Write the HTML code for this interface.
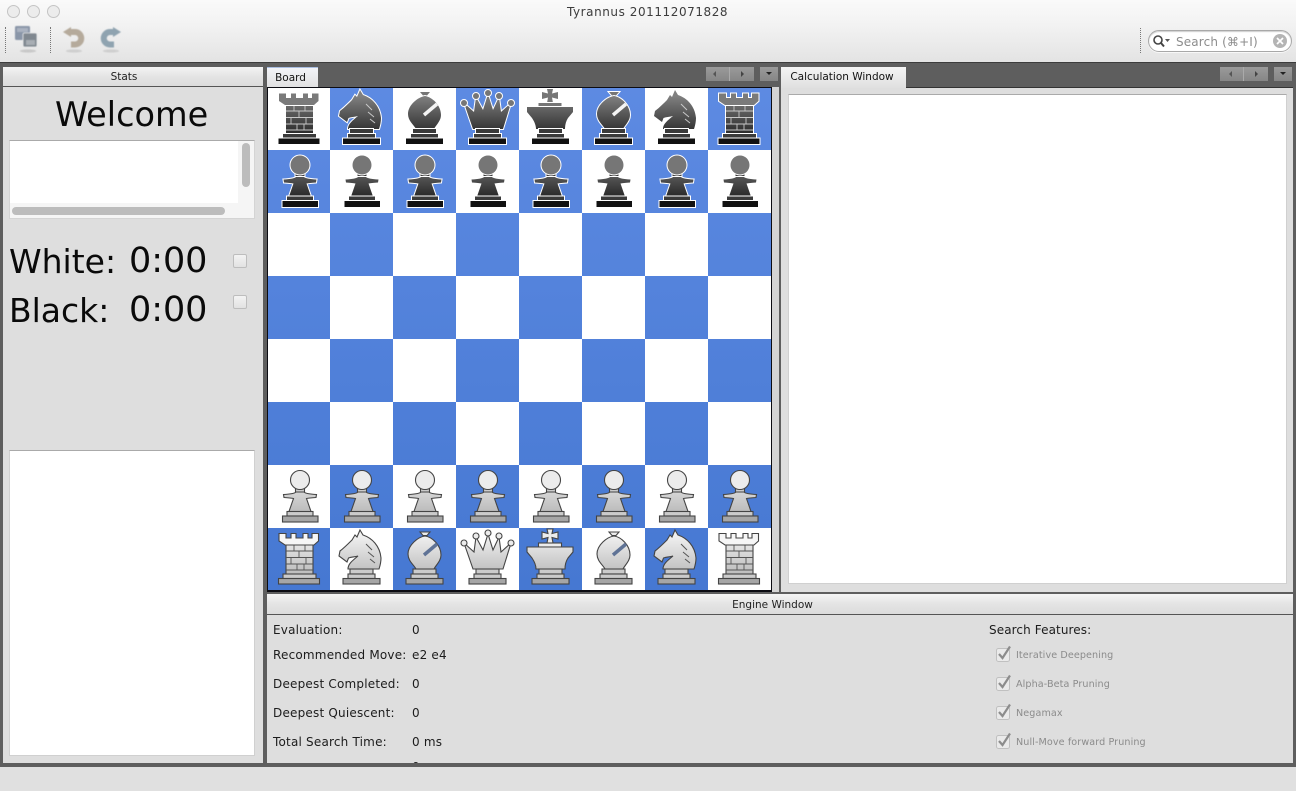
<!DOCTYPE html>
<html><head><meta charset="utf-8"><title>Tyrannus</title>
<style>
html,body{margin:0;padding:0;width:1296px;height:791px;overflow:hidden;background:#e0e0e0}
body{position:relative;font-family:"DejaVu Sans","Liberation Sans",sans-serif;color:#111}
div,span,svg{position:absolute;box-sizing:border-box}
.t{white-space:nowrap;line-height:1}
.hdr{background:linear-gradient(#f4f4f4,#e4e4e4 50%,#dcdcdc);text-align:center;font-size:10.5px;color:#222}
.lab{font-size:12px;color:#1c1c1c;letter-spacing:.2px}
.dis{font-size:9.6px;color:#8b8b8b;letter-spacing:.1px}
.btn{background:linear-gradient(#9a9a9a,#868686);height:14px;top:67px}
.tri{width:0;height:0;border:3px solid transparent}
.dots{width:1px;border-left:1px dotted #777}
.b{fill:url(#bg);stroke:#fff;stroke-width:2;paint-order:stroke;--h:#767676;--c:#3a3a3a;--e:#111;--r:#7a7a7a;--l:#c8c8c8;--s:#f4f4f4}
.w{fill:url(#wg);stroke:#444;stroke-width:1.1;--h:#ececec;--c:#cbcbcb;--e:#a6a6a6;--r:#f6f6f6;--l:#555;--s:#5f7396}
</style></head><body>

<!-- toolbar -->
<div style="left:0;top:0;width:1296px;height:63px;background:linear-gradient(#fafafa,#f2f2f2 40%,#e3e3e3)"></div>
<div style="left:7px;top:5px;width:13px;height:13px;border-radius:50%;border:1.5px solid #c4c4c4;background:#ececec"></div>
<div style="left:27px;top:5px;width:13px;height:13px;border-radius:50%;border:1.5px solid #c4c4c4;background:#ececec"></div>
<div style="left:47px;top:5px;width:13px;height:13px;border-radius:50%;border:1.5px solid #c4c4c4;background:#ececec"></div>
<div class="t" style="left:567px;top:6px;font-size:12px;letter-spacing:.56px;color:#3c3c3c">Tyrannus 201112071828</div>
<div class="dots" style="left:5px;top:27px;height:26px"></div>
<div class="dots" style="left:50px;top:27px;height:26px"></div>
<div class="dots" style="left:1140px;top:28px;height:25px"></div>

<svg style="left:0;top:0;filter:blur(.4px)" width="140" height="62" viewBox="0 0 140 62">
 <ellipse cx="28" cy="51" rx="8" ry="1.6" fill="#c8c8c8"/><ellipse cx="74" cy="51" rx="8" ry="1.6" fill="#cfcfcf"/><ellipse cx="111" cy="51" rx="8" ry="1.6" fill="#cfcfcf"/>
 <rect x="15" y="26" width="15" height="14" rx="1.5" fill="#8a96a8"/>
 <rect x="17" y="28" width="11" height="4" fill="#aab2c0"/>
 <rect x="23" y="33" width="14" height="14" rx="1.5" fill="#808890" stroke="#eee" stroke-width=".8"/>
 <rect x="26" y="40" width="9" height="5" fill="#a8aeb4"/>
 <path d="M68 32H75A6.2 6.2 0 0 1 75 44.5H71" fill="none" stroke="#b5aa9b" stroke-width="6"/>
 <path d="M63 32L71 27V37Z" fill="#b5aa9b"/>
 <path d="M116 32H110A6.2 6.2 0 0 0 110 44.5H114" fill="none" stroke="#8fa3b0" stroke-width="6"/>
 <path d="M121 32L113 27V37Z" fill="#8fa3b0"/>
</svg>

<!-- search -->
<div style="left:1148px;top:30px;width:144px;height:22px;border-radius:11px;background:#fff;border:1px solid #a8a8a8;box-shadow:inset 0 1px 1px #ccc,0 1px 0 #f8f8f8"></div>
<svg style="left:1152px;top:33px" width="20" height="16" viewBox="0 0 20 16"><circle cx="6" cy="7" r="4" fill="none" stroke="#444" stroke-width="1.6"/><path d="M9 10L12 13.5" stroke="#444" stroke-width="2"/><path d="M13 6H18L15.5 9Z" fill="#555"/></svg>
<div class="t" style="left:1176px;top:36px;font-size:12px;color:#8c8c8c;letter-spacing:.15px">Search (⌘+I)</div>
<svg style="left:1272px;top:33px" width="16" height="16" viewBox="0 0 16 16"><circle cx="8" cy="8" r="7" fill="#b4b4b4"/><path d="M5 5L11 11M11 5L5 11" stroke="#fff" stroke-width="1.7"/></svg>

<!-- main dark backdrop -->
<div style="left:0;top:62px;width:1296px;height:705px;background:#5e5e5e"></div>
<div style="left:0;top:62px;width:1296px;height:1px;background:#3c3c3c"></div>

<!-- Stats panel -->
<div style="left:3px;top:67px;width:260px;height:696px;background:#dedede"></div>
<div class="hdr" style="left:3px;top:67px;width:260px;height:20px;border-bottom:1px solid #555;padding-top:3.5px;padding-right:18px">Stats</div>
<div class="t" style="left:55px;top:98px;font-size:33.5px;color:#0a0a0a">Welcome</div>
<div style="left:9px;top:140px;width:246px;height:79px;background:#f5f5f5;border:1px solid #d4d4d4;border-top-color:#aaa"></div>
<div style="left:10px;top:141px;width:228px;height:62px;background:#fff"></div>
<div style="left:242px;top:143px;width:8px;height:44px;border-radius:4px;background:#bcbcbc"></div>
<div style="left:12px;top:207px;width:213px;height:8px;border-radius:4px;background:#bcbcbc"></div>

<div class="t" style="left:9px;top:245px;font-size:33px;color:#0a0a0a">White:</div>
<div class="t" style="left:129px;top:244px;font-size:35px;color:#0a0a0a;letter-spacing:-.05px">0:00</div>
<div style="left:233px;top:254px;width:14px;height:14px;border:1px solid #bdbdbd;border-radius:2px;background:linear-gradient(#f3f3f3,#e2e2e2)"></div>
<div class="t" style="left:9px;top:294px;font-size:33px;color:#0a0a0a">Black:</div>
<div class="t" style="left:129px;top:293px;font-size:35px;color:#0a0a0a;letter-spacing:-.05px">0:00</div>
<div style="left:233px;top:295px;width:14px;height:14px;border:1px solid #bdbdbd;border-radius:2px;background:linear-gradient(#f3f3f3,#e2e2e2)"></div>
<div style="left:9px;top:450px;width:246px;height:306px;background:#fff;border:1px solid #d0d0d0;border-top-color:#aaa"></div>

<!-- Board tab and controls -->
<div class="hdr" style="left:267px;top:67px;width:51px;height:21px;padding-top:3.5px;padding-right:4px;color:#111;border-top:1px solid #a9bde0;background:linear-gradient(#f2f4f8,#e0e0e0)">Board</div>
<div class="btn" style="left:706px;width:24px;border-right:1px solid #aaa"></div>
<div class="btn" style="left:730px;width:24px"></div>
<div class="btn" style="left:760px;width:18px"></div>
<div class="tri" style="left:713px;top:71px;border-right-color:#555;border-left:0"></div>
<div class="tri" style="left:741px;top:71px;border-left-color:#444;border-right:0"></div>
<div class="tri" style="left:766px;top:72px;border-top-color:#222;border-bottom:0"></div>

<!-- Board -->
<div style="left:772px;top:87px;width:7px;height:505px;background:#d4d4d4"></div>
<div style="left:267px;top:87px;width:505px;height:505px;background:#0c0c12"></div>
<svg style="left:268px;top:88px" width="503" height="502" viewBox="0 0 503 502">
<defs>
 <linearGradient id="blue" gradientUnits="userSpaceOnUse" x1="0" y1="0" x2="0" y2="502"><stop offset="0" stop-color="#5d8ae2"/><stop offset="1" stop-color="#4678d2"/></linearGradient>
 <linearGradient id="bg" gradientUnits="userSpaceOnUse" x1="0" y1="8" x2="0" y2="52"><stop offset="0" stop-color="#808080"/><stop offset="1" stop-color="#1c1c1c"/></linearGradient>
 <linearGradient id="wg" gradientUnits="userSpaceOnUse" x1="0" y1="8" x2="0" y2="52"><stop offset="0" stop-color="#f0f0f0"/><stop offset="1" stop-color="#b4b4b4"/></linearGradient>
 <symbol id="base" overflow="visible" viewBox="0 0 63 63" width="63" height="63">
  <rect x="20" y="41" width="23" height="5" style="fill:var(--c)"/>
  <rect x="18" y="46" width="27" height="4.5" style="fill:var(--c)"/>
  <rect x="13" y="50.5" width="37" height="5.5" style="fill:var(--e)"/>
 </symbol>
 <symbol id="p" overflow="visible" viewBox="0 0 63 63" width="63" height="63">
  <rect x="27.5" y="23" width="9" height="6" style="fill:var(--c)"/>
  <circle cx="32" cy="15" r="9.5" style="fill:var(--h)"/>
  <path d="M15.500 29.500Q26 29 28 27H36Q38 29 48.500 29.500L48 32.500Q41 33 38.500 33.500L43 46.500H21L25.500 33.500Q23 33 16 32.500Z"/>
  <rect x="19" y="46.5" width="26" height="4.5" style="fill:var(--c)"/>
  <rect x="14.5" y="51" width="35.500" height="6" style="fill:var(--e)"/>
 </symbol>
 <symbol id="r" overflow="visible" viewBox="0 0 63 63" width="63" height="63">
  <path d="M18 17V47H45V17Z"/>
  <path d="M18 23H45M18 29.500H45M18 36H45M18 42H45M26 17V23M37 17V23M31 23V29.500M23 29.500V36M38 29.500V36M29 36V42M36 36V42" fill="none" style="stroke:var(--l)" stroke-width=".9"/>
  <path d="M11 5.500H18V10H23V5.500H28V10H35V5.500H40V10H44V5.500H50.500V13L46 17H17L11 13Z" style="fill:var(--r)"/>
  <rect x="15" y="46" width="33" height="4.500" style="fill:var(--c)"/>
  <rect x="10.500" y="50.500" width="41" height="5.500" style="fill:var(--e)"/>
 </symbol>
 <symbol id="n" overflow="visible" viewBox="0 0 63 63" width="63" height="63">
  <path d="M30 2L33 7C42 10 50 18 51 30C51 34 50 38 49 41H18C18 36 22 33 28 28C24 29 21 29 18.500 30L17 34L9 28L10 23C14 20 19 15 22 12L25 7L27 9Z"/>
  <path d="M36 16L42 22M38 24L44 29M40 31L45 35" fill="none" style="stroke:var(--l)" stroke-width="1"/>
  <use href="#base" x="0" y="0"/>
 </symbol>
 <symbol id="bi" overflow="visible" viewBox="0 0 63 63" width="63" height="63">
  <path d="M27 4H37L34 7.500H30Z" style="fill:var(--h)"/>
  <path d="M32 8C39 9 48 17 48 27C48 33 43 37 41 41H23C21 37 15 33 15 26C15 17 25 9 32 8Z"/>
  <path d="M31 27L44 16" fill="none" style="stroke:var(--s)" stroke-width="3.500"/>
  <use href="#base" x="0" y="0"/>
 </symbol>
 <symbol id="q" overflow="visible" viewBox="0 0 63 63" width="63" height="63">
  <path d="M8 15L18 24L20 9L27 22L32 6L37 22L43 9L45 24L55 15L47 41H17Z"/>
  <circle cx="8" cy="15" r="3" style="fill:var(--h)"/><circle cx="20" cy="8" r="3" style="fill:var(--h)"/><circle cx="32" cy="5" r="3" style="fill:var(--h)"/><circle cx="43" cy="8" r="3" style="fill:var(--h)"/><circle cx="55" cy="15" r="3" style="fill:var(--h)"/>
  <use href="#base" x="0" y="0"/>
 </symbol>
 <symbol id="k" overflow="visible" viewBox="0 0 63 63" width="63" height="63">
  <path d="M28 1H34L33 5.500L39 4V11L33 9.500L34 15H28L29 9.500L23 11V4L29 5.500Z" style="fill:var(--h)"/>
  <rect x="19.500" y="15" width="23" height="4" style="fill:var(--h)"/>
  <path d="M8 19H54V24L49 30C47 33 46 37 46 41H17C17 37 15 33 13 30L8 24Z"/>
  <use href="#base" x="0" y="0"/>
 </symbol>
</defs>
<rect width="503" height="502" fill="#fff"/>
<path fill="url(#blue)" d="M62 0h63v62h-63zM188 0h63v62h-63zM314 0h63v62h-63zM440 0h63v62h-63z
M0 62h62v63h-62zM125 62h63v63h-63zM251 62h63v63h-63zM377 62h63v63h-63z
M62 125h63v63h-63zM188 125h63v63h-63zM314 125h63v63h-63zM440 125h63v63h-63z
M0 188h62v63h-62zM125 188h63v63h-63zM251 188h63v63h-63zM377 188h63v63h-63z
M62 251h63v63h-63zM188 251h63v63h-63zM314 251h63v63h-63zM440 251h63v63h-63z
M0 314h62v63h-62zM125 314h63v63h-63zM251 314h63v63h-63zM377 314h63v63h-63z
M62 377h63v63h-63zM188 377h63v63h-63zM314 377h63v63h-63zM440 377h63v63h-63z
M0 440h62v62h-62zM125 440h63v62h-63zM251 440h63v62h-63zM377 440h63v62h-63z"/>
<g class="b">
 <use href="#r" x="0" y="0"/><use href="#n" x="62" y="0"/><use href="#bi" x="125" y="0"/><use href="#q" x="188" y="0"/><use href="#k" x="251" y="0"/><use href="#bi" x="314" y="0"/><use href="#n" x="377" y="0"/><use href="#r" x="440" y="0"/>
 <use href="#p" y="62" x="0"/><use href="#p" y="62" x="62"/><use href="#p" y="62" x="125"/><use href="#p" y="62" x="188"/><use href="#p" y="62" x="251"/><use href="#p" y="62" x="314"/><use href="#p" y="62" x="377"/><use href="#p" y="62" x="440"/>
</g>
<g class="w">
 <use href="#p" y="377" x="0"/><use href="#p" y="377" x="62"/><use href="#p" y="377" x="125"/><use href="#p" y="377" x="188"/><use href="#p" y="377" x="251"/><use href="#p" y="377" x="314"/><use href="#p" y="377" x="377"/><use href="#p" y="377" x="440"/>
 <use href="#r" x="0" y="440"/><use href="#n" x="62" y="440"/><use href="#bi" x="125" y="440"/><use href="#q" x="188" y="440"/><use href="#k" x="251" y="440"/><use href="#bi" x="314" y="440"/><use href="#n" x="377" y="440"/><use href="#r" x="440" y="440"/>
</g>
</svg>

<!-- Calculation window -->
<div style="left:781px;top:87px;width:512px;height:505px;background:#dedede;border-top:1px solid #333"></div>
<div class="hdr" style="left:781px;top:67px;width:125px;height:21px;padding-top:3.5px;padding-right:3px;color:#111;background:linear-gradient(#f4f4f4,#e0e0e0)">Calculation Window</div>
<div style="left:788px;top:94px;width:499px;height:490px;background:#fff;border:1px solid #d0d0d0;border-top-color:#aaa"></div>
<div class="btn" style="left:1220px;width:24px;border-right:1px solid #aaa"></div>
<div class="btn" style="left:1244px;width:24px"></div>
<div class="btn" style="left:1274px;width:18px"></div>
<div class="tri" style="left:1229px;top:71px;border-right-color:#555;border-left:0"></div>
<div class="tri" style="left:1255px;top:71px;border-left-color:#444;border-right:0"></div>
<div class="tri" style="left:1280px;top:72px;border-top-color:#222;border-bottom:0"></div>

<!-- Engine window -->
<div style="left:267px;top:594px;width:1026px;height:169px;background:#dedede;overflow:hidden">
 <div class="hdr" style="left:0;top:0;width:1026px;height:21px;border-bottom:1px solid #555;padding-top:5px;padding-right:15px">Engine Window</div>
 <div class="t lab" style="left:6px;top:30px">Evaluation:</div><div class="t lab" style="left:145px;top:30px">0</div>
 <div class="t lab" style="left:6px;top:55px">Recommended Move:</div><div class="t lab" style="left:145px;top:55px">e2 e4</div>
 <div class="t lab" style="left:6px;top:84px">Deepest Completed:</div><div class="t lab" style="left:145px;top:84px">0</div>
 <div class="t lab" style="left:6px;top:113px">Deepest Quiescent:</div><div class="t lab" style="left:145px;top:113px">0</div>
 <div class="t lab" style="left:6px;top:142px">Total Search Time:</div><div class="t lab" style="left:145px;top:142px">0 ms</div>
 <div class="t lab" style="left:145px;top:167px">0</div>
 <div class="t lab" style="left:722px;top:30px;letter-spacing:.1px">Search Features:</div>
 <svg style="left:729px;top:51px" width="16" height="17" viewBox="0 0 16 17"><rect x=".5" y="3.500" width="13" height="13" rx="2" fill="#eaeaea" stroke="#c0c0c0"/><path d="M3 9L6.500 13L14 1.500" fill="none" stroke="#8c8c8c" stroke-width="2.200"/></svg>
 <div class="t dis" style="left:749px;top:57px">Iterative Deepening</div>
 <svg style="left:729px;top:80px" width="16" height="17" viewBox="0 0 16 17"><rect x=".5" y="3.500" width="13" height="13" rx="2" fill="#eaeaea" stroke="#c0c0c0"/><path d="M3 9L6.500 13L14 1.500" fill="none" stroke="#8c8c8c" stroke-width="2.200"/></svg>
 <div class="t dis" style="left:749px;top:86px">Alpha-Beta Pruning</div>
 <svg style="left:729px;top:109px" width="16" height="17" viewBox="0 0 16 17"><rect x=".5" y="3.500" width="13" height="13" rx="2" fill="#eaeaea" stroke="#c0c0c0"/><path d="M3 9L6.500 13L14 1.500" fill="none" stroke="#8c8c8c" stroke-width="2.200"/></svg>
 <div class="t dis" style="left:749px;top:115px">Negamax</div>
 <svg style="left:729px;top:138px" width="16" height="17" viewBox="0 0 16 17"><rect x=".5" y="3.500" width="13" height="13" rx="2" fill="#eaeaea" stroke="#c0c0c0"/><path d="M3 9L6.500 13L14 1.500" fill="none" stroke="#8c8c8c" stroke-width="2.200"/></svg>
 <div class="t dis" style="left:749px;top:144px">Null-Move forward Pruning</div>
</div>

<div style="left:0;top:767px;width:1296px;height:24px;background:#e0e0e0"></div>
</body></html>
